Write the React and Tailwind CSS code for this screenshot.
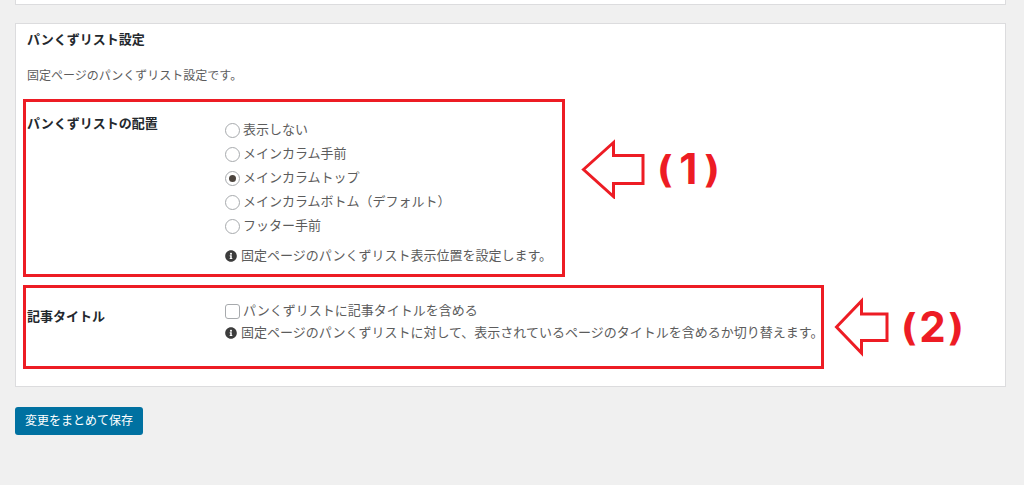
import { useState } from "react";
import { FaInfoCircle } from "react-icons/fa";

const positions = [
  { value: "none", label: "表示しない" },
  { value: "before-main", label: "メインカラム手前" },
  { value: "main-top", label: "メインカラムトップ" },
  { value: "main-bottom", label: "メインカラムボトム（デフォルト）" },
  { value: "before-footer", label: "フッター手前" },
];

const Hint = ({ children }) => (
  <p className="flex items-center gap-1 text-[13px] leading-5 whitespace-nowrap">
    <FaInfoCircle className="h-3 w-3 shrink-0 text-[#3c3c3c]" />
    <span>{children}</span>
  </p>
);

const Callout = ({ number, children }) => (
  <div className="flex shrink-0 items-center gap-3 text-[#ed1c24]">
    {children}
    <span className="flex items-center font-['DejaVu_Sans',sans-serif] text-[38px] leading-none font-bold">
      <span>(</span>
      <span className="w-7 text-center font-['Inter',sans-serif] text-[42px] leading-none">{number}</span>
      <span>)</span>
    </span>
  </div>
);

const App = () => {
  const [position, setPosition] = useState("main-top");
  const [includeTitle, setIncludeTitle] = useState(false);

  return (
    <div className="min-h-screen bg-[#f0f0f0] pr-[18px] pl-[15px] font-['Liberation_Sans','Noto_Sans_CJK_JP',sans-serif] text-[#5c5c5c]">
      <div className="h-[5px] border border-t-0 border-[#dcdcde] bg-white" />

      <form onSubmit={(e) => e.preventDefault()}>
        <section className="mt-[18px] border border-[#dcdcde] bg-white pt-1.5 pb-[17px] pl-[7px]">
          <h2 className="pl-1 text-[13px] leading-5 font-bold text-[#23282d]">パンくずリスト設定</h2>
          <p className="mt-4 pl-1 text-xs leading-5">固定ページのパンくずリスト設定です。</p>

          {/* Breadcrumb position */}
          <div className="mt-[13px] flex items-start gap-4">
            <div className="flex w-[542px] items-start border-3 border-[#ed1c24] pt-3 pb-2 pl-px">
              <h3 id="position-label" className="w-[198px] shrink-0 text-[13px] leading-5 font-bold text-[#23282d]">
                パンくずリストの配置
              </h3>
              <div>
                <div role="radiogroup" aria-labelledby="position-label" className="pt-1">
                  {positions.map((item) => (
                    <label key={item.value} className="flex h-6 items-center gap-[3px] text-[13px] leading-5">
                      <input
                        type="radio"
                        name="position"
                        value={item.value}
                        checked={position === item.value}
                        onChange={() => setPosition(item.value)}
                        className="grid h-[15px] w-[15px] shrink-0 appearance-none place-items-center rounded-full border border-[#a7aaad] bg-white checked:before:h-[7px] checked:before:w-[7px] checked:before:rounded-full checked:before:bg-[#4d453e]"
                      />
                      {item.label}
                    </label>
                  ))}
                </div>
                <div className="mt-2">
                  <Hint>固定ページのパンくずリスト表示位置を設定します。</Hint>
                </div>
              </div>
            </div>
            <div className="pt-10">
              <Callout number="1">
                <svg className="h-[60px] w-[64px]" viewBox="0 0 64 60" fill="none" stroke="currentColor" strokeWidth="3">
                  <path d="M2.500 30.500 L32.500 3.500 V16.500 H62 V44.500 H32.500 V57.500 Z" />
                </svg>
              </Callout>
            </div>
          </div>

          {/* Page title */}
          <div className="mt-2 flex items-center gap-2.5">
            <div className="flex h-[84px] w-[801px] items-start border-3 border-[#ed1c24] pt-[11px] pl-px">
              <h3 className="w-[198px] shrink-0 pt-2 text-[13px] leading-5 font-bold text-[#23282d]">記事タイトル</h3>
              <div>
                <label className="flex items-center gap-[3px] text-[13px] leading-6">
                  <input
                    type="checkbox"
                    checked={includeTitle}
                    onChange={(e) => setIncludeTitle(e.target.checked)}
                    className="h-[15px] w-[15px] shrink-0 appearance-none rounded-[3px] border border-[#a7aaad] bg-white checked:bg-[#0071a1]"
                  />
                  パンくずリストに記事タイトルを含める
                </label>
                <Hint>固定ページのパンくずリストに対して、表示されているページのタイトルを含めるか切り替えます。</Hint>
              </div>
            </div>
            <Callout number="2">
              <svg className="h-[60px] w-[55px]" viewBox="0 0 55 60" fill="none" stroke="currentColor" strokeWidth="3">
                <path d="M2.500 30 L27.500 4 V17 H53 V43.500 H27.500 V56 Z" />
              </svg>
            </Callout>
          </div>
        </section>

        <button type="submit" className="mt-5 h-7 rounded-[3px] bg-[#0071a1] px-2.5 text-xs text-white">
          変更をまとめて保存
        </button>
      </form>
    </div>
  );
};

export default App;
